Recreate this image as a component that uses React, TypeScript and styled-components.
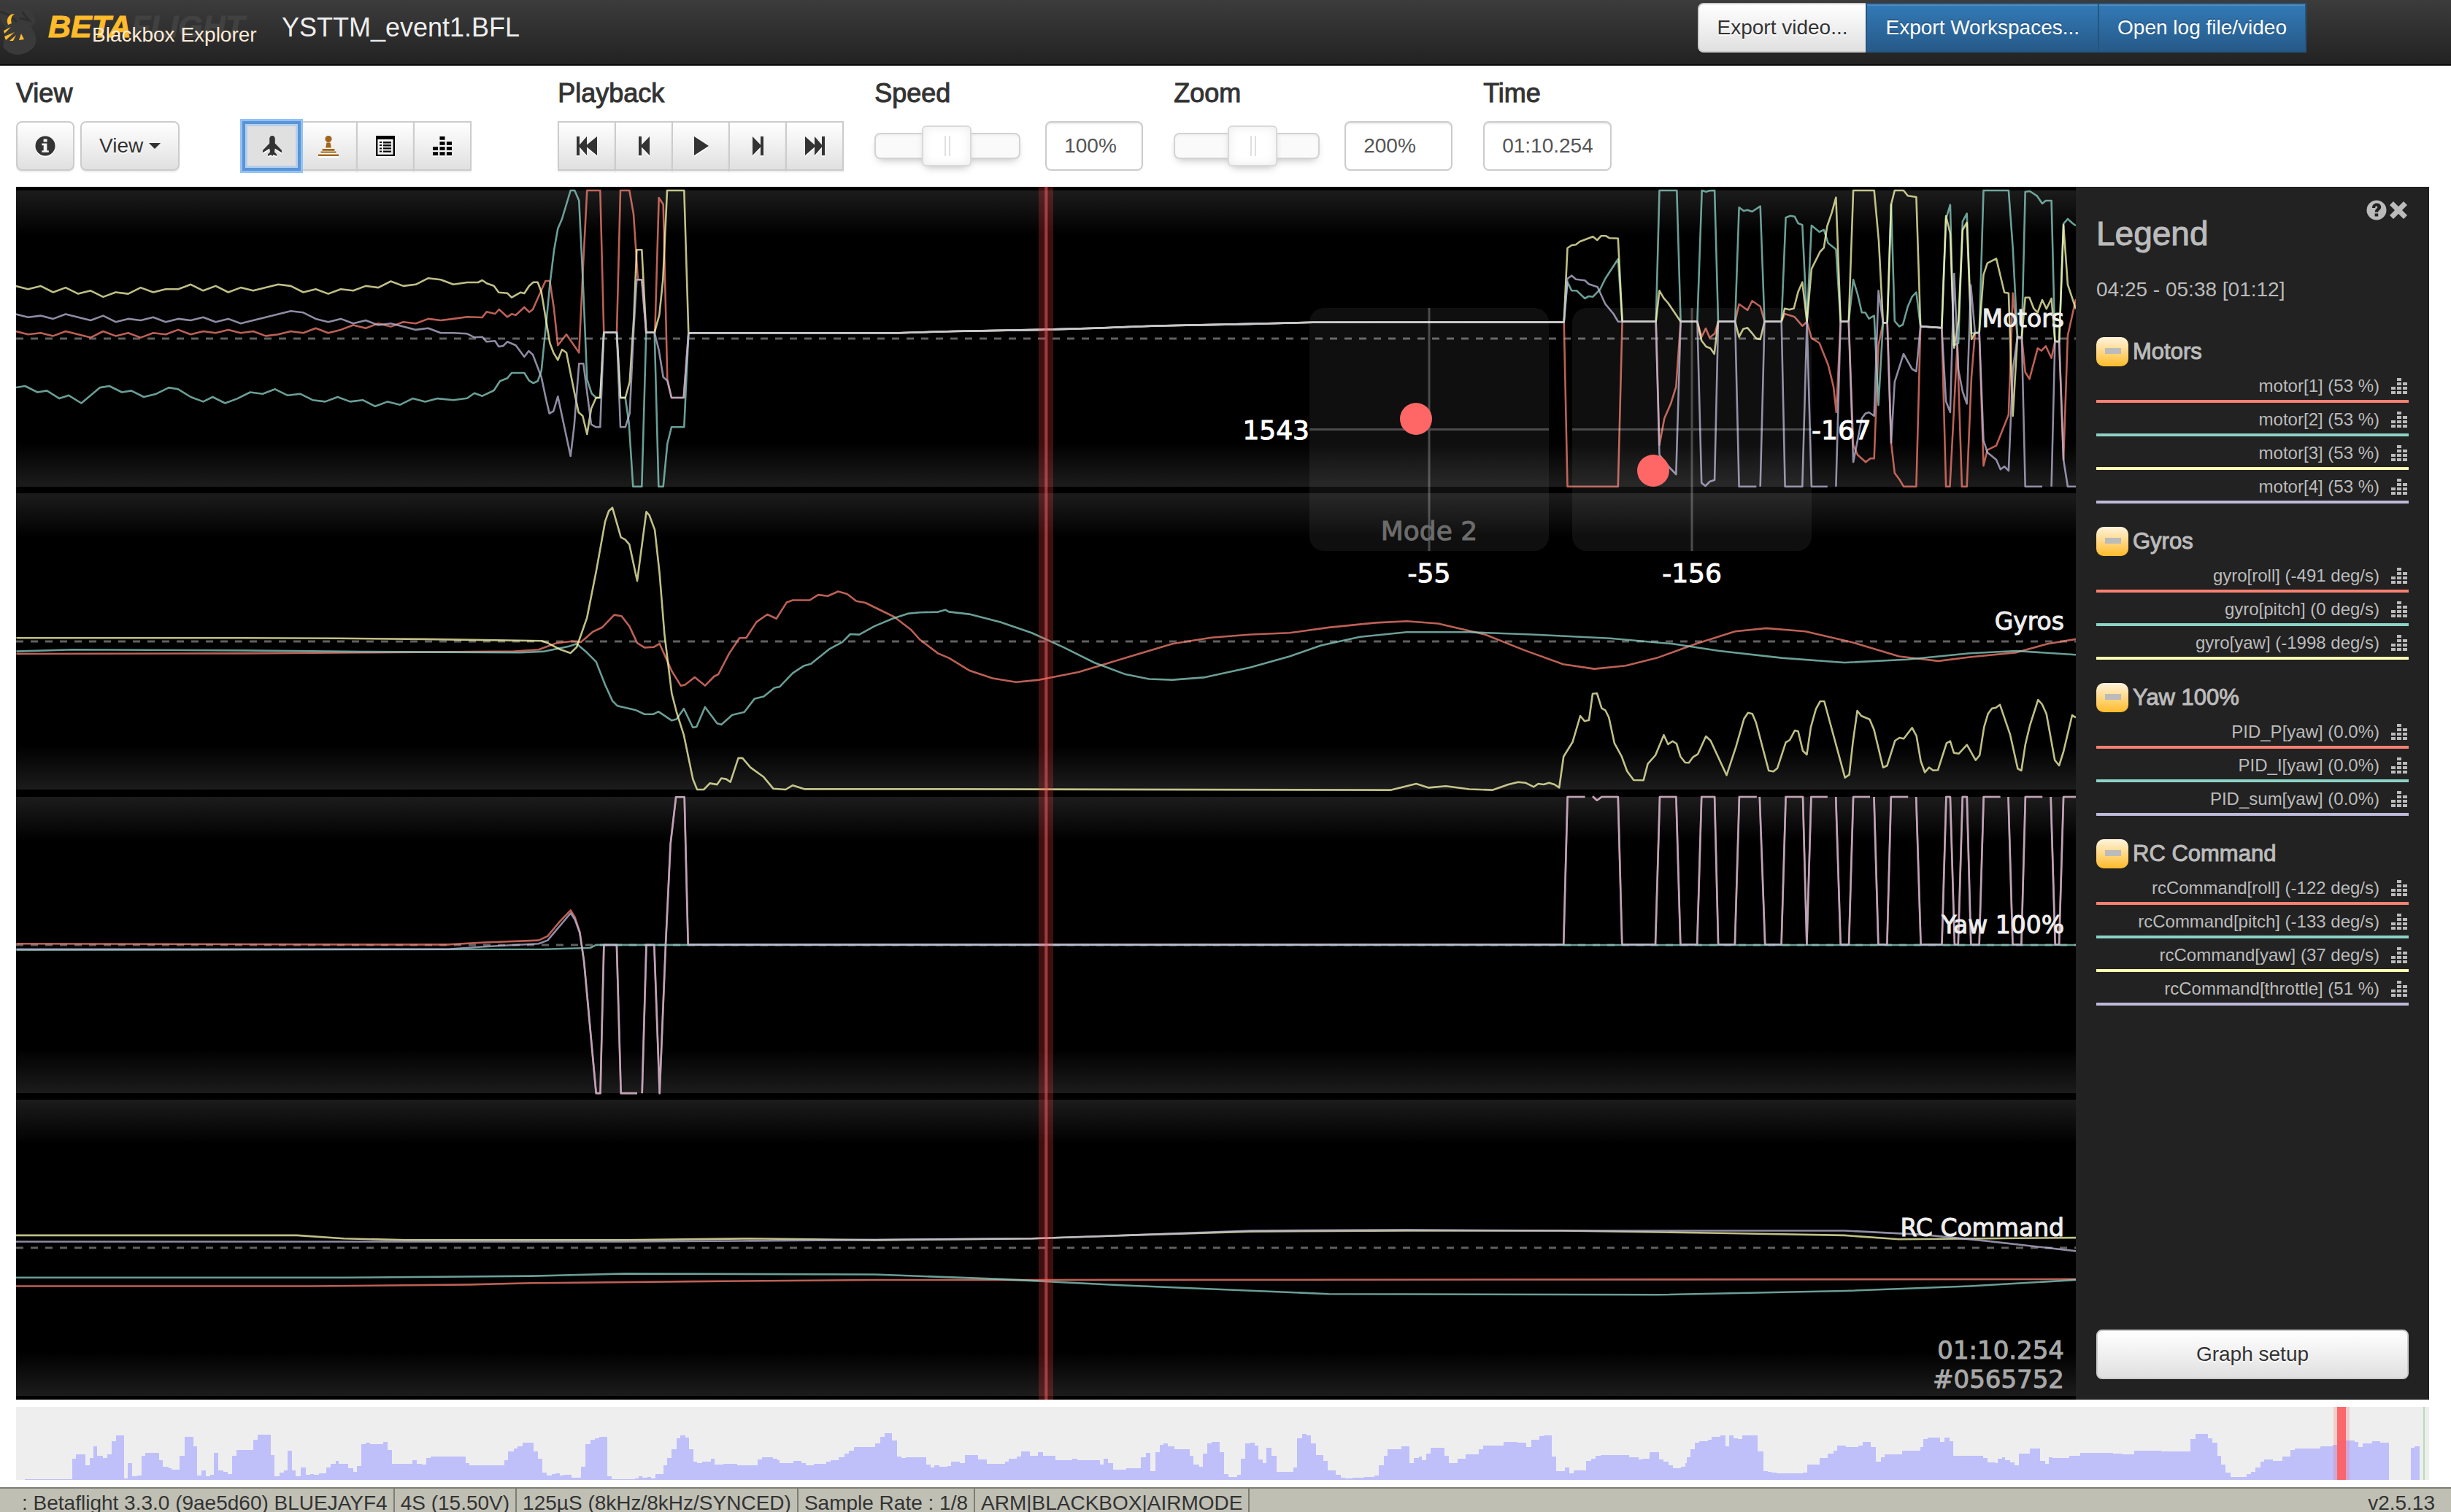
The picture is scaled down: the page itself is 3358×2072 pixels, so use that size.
import React from "react";
import styled, { createGlobalStyle, css } from "styled-components";

const GlobalStyle = createGlobalStyle`
  *, *::before, *::after { box-sizing: border-box; }
  html, body { margin: 0; background: #fff; }
  body, button, input {
    font-family: "Liberation Sans", Arial, Helvetica, sans-serif;
    font-size: 28px;
    line-height: 40px;
    color: #333;
  }
`;

const SERIES = {
  red: "#fb8072",
  teal: "#8dd3c7",
  yellow: "#ffffb3",
  purple: "#bebada",
};
type SeriesColor = keyof typeof SERIES;

/* ---------- page shell ---------- */

const Page = styled.div`
  display: flex;
  flex-direction: column;
  height: 100vh;
  overflow: hidden;
`;

const Header = styled.header`
  display: flex;
  align-items: flex-start;
  height: 90px;
  flex: none;
  padding-right: 198px;
  background: linear-gradient(#3c3c3c, #222);
  border-bottom: 2px solid #080808;
`;

const Brand = styled.div`
  position: relative;
  display: flex;
  width: 386px;
  padding-top: 12px;
`;

const BrandName = styled.span`
  margin-left: 14px;
  font-size: 43px;
  line-height: 48px;
  font-weight: 700;
  font-style: italic;
  -webkit-text-stroke: 1px currentColor;
  color: #414141;
  b { color: #ffbb2a; }
`;

const BrandSub = styled.span`
  position: absolute;
  left: 126px;
  top: 28px;
  white-space: nowrap;
  color: #fdebd8;
`;

const FileName = styled.span`
  flex: 1;
  padding-top: 18px;
  font-size: 36px;
  color: #eee;
`;

/* ---------- buttons ---------- */

const buttonBase = css`
  display: inline-flex;
  align-items: center;
  justify-content: center;
  height: 68px;
  padding: 0 24px;
  border: 2px solid #ccc;
  border-radius: 8px;
  background: linear-gradient(#fff, #e0e0e0);
  box-shadow: inset 0 2px 0 rgba(255, 255, 255, 0.15), 0 2px 2px rgba(0, 0, 0, 0.075);
  text-shadow: 0 2px 0 #fff;
  white-space: nowrap;
  cursor: pointer;
`;

const Button = styled.button<{ $wide?: boolean }>`
  ${buttonBase}
  gap: 8px;
  width: ${(p) => (p.$wide ? "100%" : "auto")};
`;

const IconButton = styled.button`
  ${buttonBase}
  width: 80px;
  padding: 0;
  svg { filter: drop-shadow(0 2px 0 #fff); }
`;

const Segment = styled(IconButton)<{ $active?: boolean }>`
  border-radius: 0;
  & + & { margin-left: -2px; }
  ${(p) =>
    p.$active &&
    css`
      position: relative;
      z-index: 1;
      border-color: #5994d6;
      background: #e0e0e0;
      box-shadow: 0 0 0 3px #92c1f6, inset 0 0 0 2px #5994d6, inset 0 0 0 5px #b4cfee;
    `}
`;

const HeaderButtons = styled.div`
  display: flex;
  padding-top: 4px;
`;

const ExportButton = styled.button`
  ${buttonBase}
  padding: 0 25px;
  border-radius: 8px 0 0 8px;
`;

const PrimaryButton = styled.button`
  ${buttonBase}
  margin-left: -2px;
  padding: 0 25px;
  border-radius: 0;
  border-color: #245580;
  background: linear-gradient(#337ab7, #265a88);
  box-shadow: inset 0 2px 0 rgba(255, 255, 255, 0.15);
  text-shadow: 0 -2px 0 rgba(0, 0, 0, 0.2);
  color: #fff;
`;

const Caret = styled.span`
  border: 8px solid transparent;
  border-top-color: #333;
  border-bottom-width: 0;
`;

/* ---------- toolbar ---------- */

const Toolbar = styled.section`
  display: flex;
  gap: 42px;
  flex: none;
  padding: 18px 30px 22px 22px;
`;

const ToolGroup = styled.div<{ $after?: number }>`
  margin-right: ${(p) => p.$after ?? 0}px;
`;

const headingStyle = css`
  display: block;
  margin: 0 0 18px;
  font-size: 36px;
  line-height: 40px;
  font-weight: 400;
  -webkit-text-stroke: 1px currentColor;
`;
const ToolHeading = styled.h4`${headingStyle}`;
const ToolLabel = styled.label`${headingStyle}`;

const Controls = styled.div<{ $gap?: number }>`
  display: flex;
  align-items: center;
  gap: ${(p) => p.$gap ?? 0}px;
`;

const Segments = styled.div<{ $before?: number }>`
  display: flex;
  margin-left: ${(p) => p.$before ?? 0}px;
`;

const TextBox = styled.input<{ $width: number }>`
  width: ${(p) => p.$width}px;
  height: 68px;
  padding: 0 24px;
  border: 2px solid #ccc;
  border-radius: 8px;
  background: #fff;
  box-shadow: inset 0 2px 2px rgba(0, 0, 0, 0.075);
  color: #555;
`;

const Slider = styled.input`
  appearance: none;
  width: 200px;
  height: 56px;
  margin: 0;
  background: transparent;
  &::-webkit-slider-runnable-track {
    height: 36px;
    border: 2px solid #d3d3d3;
    border-radius: 8px;
    background: #fafafa;
    box-shadow: inset 0 2px 3px #f0f0f0, 0 6px 12px -5px #bbb;
  }
  &::-webkit-slider-thumb {
    appearance: none;
    width: 68px;
    height: 56px;
    margin: -12px -2px 0;
    border: 2px solid #d9d9d9;
    border-radius: 6px;
    background:
      linear-gradient(#e0e0e0, #e0e0e0) 29px 50% / 2px 28px no-repeat,
      linear-gradient(#e0e0e0, #e0e0e0) 35px 50% / 2px 28px no-repeat,
      #fff;
    box-shadow: inset 0 0 14px #ebebeb, inset 0 0 2px #fff, 0 6px 12px -5px #bbb;
  }
`;

/* ---------- graph and legend ---------- */

const Main = styled.main`
  display: flex;
  flex: 1;
  min-height: 0;
  margin: 0 30px 0 22px;
`;

const GraphArea = styled.div`
  flex: 1;
  min-width: 0;
  background: #000;
  svg { display: block; width: 100%; height: 100%; }
  text { font-family: "DejaVu Sans", Verdana, sans-serif; }
`;

const Legend = styled.aside`
  display: flex;
  flex-direction: column;
  width: 484px;
  padding: 18px 28px 28px;
  background: #222;
  color: #bbb;
`;

const LegendTools = styled.div`
  display: flex;
  justify-content: flex-end;
  gap: 2px;
  height: 20px;
  button { padding: 0; border: 0; background: none; height: 28px; color: #bbb; line-height: 0; }
`;

const LegendTitle = styled.h3`
  margin: 0;
  font-size: 46px;
  line-height: 52px;
  font-weight: 400;
  -webkit-text-stroke: 1px currentColor;
`;

const LogRange = styled.p`
  margin: 31px 0 45px;
`;

const FieldGroup = styled.section`
  margin-bottom: 32px;
`;

const GroupTitle = styled.h4`
  display: flex;
  align-items: center;
  gap: 6px;
  height: 40px;
  margin: 0 0 4px;
  font-size: 31px;
  font-weight: 400;
  -webkit-text-stroke: 1px currentColor;
`;

const Toggle = styled.button`
  display: flex;
  align-items: center;
  width: 44px;
  height: 40px;
  padding: 0 0 2px 12px;
  border: 0;
  border-radius: 10px;
  background: linear-gradient(#fff4de, #ffbb2a);
  &::before {
    content: "";
    width: 22px;
    height: 8px;
    background: #bbb;
  }
`;

const FieldList = styled.ul`
  margin: 0;
  padding: 0;
  list-style: none;
`;

const Field = styled.li<{ $color: SeriesColor }>`
  display: flex;
  align-items: center;
  justify-content: flex-end;
  gap: 16px;
  height: 46px;
  padding: 4px 2px 0 0;
  border-bottom: 4px solid ${(p) => SERIES[p.$color]};
  font-size: 24px;
`;

const LegendFooter = styled.div`
  margin-top: auto;
`;

/* ---------- seek bar and status bar ---------- */

const SeekBar = styled.div`
  flex: none;
  height: 100px;
  margin: 10px 30px 10px 22px;
  background: #eee;
  svg { display: block; width: 100%; height: 100%; }
`;

const StatusBar = styled.footer`
  display: flex;
  flex: none;
  height: 34px;
  padding: 0 22px;
  border-top: 2px solid #7c7e75;
  background: #bfbfb4;
`;

const StatusItem = styled.span`
  padding: 0 8px;
  white-space: nowrap;
  border-right: 2px solid #7c7e75;
`;

const Version = styled.span`
  margin-left: auto;
`;

/* ---------- icons ---------- */

const Icon = ({ size = 28, color = "#333", children }: { size?: number; color?: string; children: React.ReactNode }) => (
  <svg width={size} height={size} viewBox="0 0 28 28" fill={color} aria-hidden="true">{children}</svg>
);

const InfoIcon = () => (
  <Icon>
    <circle cx="14" cy="14" r="13.5" />
    <path d="M11.6 4.5h5v4h-5zM9.4 10.6h7v9.6h2.4v2.6H9.4v-2.6h2.3v-7H9.4z" fill="#f4f4f4" />
  </Icon>
);
const PlaneIcon = () => (
  <Icon>
    <path d="M15 0c2.400 0 3.800 2 3.800 4.400v6.200L28 20v3.200L18.800 17.600l-.8 4.600 3 3.400v2.200l-4.400-1.800L15 28l-1.600-2-4.400 1.800v-2.200l3-3.400-.8-4.600L2 23.200V20l9.200-9.400V4.400C11.200 2 12.600 0 15 0z" />
  </Icon>
);
const PawnIcon = () => (
  <Icon color="#a0651b">
    <circle cx="14" cy="4.6" r="4.6" />
    <path d="M11.4 9.6h5.2l1.2 6.800h-7.600zM5.600 18h16.800v2.800H5.600zM3.600 21.400h20.800v2.200H3.600zM0 25.400h28V28H0z" />
  </Icon>
);
const TableIcon = () => (
  <Icon color="#000">
    <path fillRule="evenodd" d="M1 0h26v28H1zM3.4 5v20.800h21.200V5z" />
    <path d="M6 8h3v2H6zM6 12h3v2H6zM6 16.400h3v2H6zM6 20.600h3v2H6zM11 8h11v2.400H11zM11 12h11v2.400H11zM11 16.200h11v2.400H11zM11 20.400h11v2.400H11z" />
  </Icon>
);
const CELLS = [[0, 12], [0, 18], [8, 0], [8, 6], [8, 12], [8, 18], [16, 6], [16, 12], [16, 18]];
const EqualizerIcon = ({ size = 26, color = "#000" }: { size?: number; color?: string }) => (
  <svg width={size} height={size} viewBox="0 0 22 22" fill={color} aria-hidden="true">
    {CELLS.map(([x, y]) => <rect key={`${x}-${y}`} x={x} y={y} width="6" height="4" />)}
  </svg>
);
const FastBackIcon = () => <Icon><path d="M0 1h4v11.6L14 1v11.6L28 1v26L14 15.4V27L4 15.4V27H0z" /></Icon>;
const StepBackIcon = () => <Icon><path d="M7 1h4v11.6L22 1v26L11 15.4V27H7z" /></Icon>;
const PlayIcon = () => <Icon><path d="M5 1l20 13L5 27z" /></Icon>;
const StepForwardIcon = () => <Icon><path d="M22 1h-4v11.6L7 1v26l11-11.600V27h4z" /></Icon>;
const FastForwardIcon = () => <Icon><path d="M28 1h-4v11.6L14 1v11.6L1 1v26l13-11.600V27l10-11.600V27h4z" /></Icon>;
const HelpIcon = () => (
  <Icon color="#bbb">
    <circle cx="14" cy="14" r="13.5" />
    <path d="M8 11c0-4 2.6-6.4 6.2-6.400 3.400 0 6 2 6 5.200 0 4-4 4-4 7h-4.400c0-5 3.400-4.600 3.400-6.800 0-1-.6-1.400-1.400-1.400-1.200 0-1.600.8-1.600 2.400zM11.600 18.600h4.600v4h-4.600z" fill="#222" />
  </Icon>
);
const CloseIcon = () => (
  <Icon color="#bbb"><path d="M7 2l7 7 7-7 5 5-7 7 7 7-5 5-7-7-7 7-5-5 7-7-7-7z" /></Icon>
);

const BeeLogo = () => (
  <svg width="52" height="70" viewBox="0 0 52 70" aria-hidden="true">
    <path d="M0 0c10-4 20 2 26 10 8-2 16 2 20 12 4 4 2 12-4 14 8 10 12 26-2 34-12 8-28 6-36-6l4-26c-4-6-8-10-8-16z" fill="#3a3a3a" transform="translate(0 -12)" />
    <path d="M0 4l14 5 9 9M30 4l10 12-13-3" fill="none" stroke="#2e2e2e" strokeWidth="3" />
    <path d="M20 7c-9 0-12 8-9 15l5-2c-2-5 0-11 4-13zM5 30l10-5-9 9zM6 38l14-6-12 11zM13 44l9-8-4 8zM26 43l3-9 4 8z" fill="#ffbb2a" />
  </svg>
);

/* ---------- traces ---------- */

/** A run of "x,y" samples on its own grid; an "M" prefix lifts the pen. */
type Run = { x: number; y: number; sx: number; sy: number; pts: string };

const third = 1 / 3;
const wide = (pts: string): Run => ({ x: 0, y: 0, sx: 2.1416, sy: 2.1416, pts });
const burst = (pts: string): Run => ({ x: 640, y: 250, sx: third, sy: third, pts });
const recovery = (pts: string): Run => ({ x: 2100, y: 240, sx: 0.4847, sy: third, pts });
const spin = (pts: string): Run => ({ x: 0, y: 640, sx: 0.8291, sy: 0.574, pts });
const tail = (pts: string): Run => ({ x: 2080, y: 900, sx: 0.4974, sy: third, pts });

const toPath = (runs: Run[]) => {
  let d = "";
  runs.forEach((r) =>
    r.pts.trim().split(/\s+/).forEach((token) => {
      const lift = token[0] === "M";
      const [x, y] = (lift ? token.slice(1) : token).split(",").map(Number);
      d += `${d === "" || lift ? "M" : "L"}${(r.x + x * r.sx).toFixed(1)} ${(r.y + y * r.sy).toFixed(1)}`;
    })
  );
  return d;
};

const idle = wide("443,213 575,213 610,212 665,211 700,210 740,208.500 790,207.500 840,206.300 1000,206.200");

const pulses = tail("0,1183 125,1183 136,576 184,576 M205,574 217,590 230,576 275,576 286,1183 378,1183 390,576 435,576 447,1183 493,1183 505,576 541,576 551,1183 597,1183 609,576 657,576 M665,576 680,1183 725,1183 737,576 784,576 795,1183 807,576 852,576 M875,576 888,1183 911,1183 923,576 969,576 M980,576 992,1183 1016,1183 1027,576 1074,576 M1096,576 1109,1183 1167,1183 1179,576 1190,576 1202,1183 1212,1183 1224,576 1236,576 1247,1183 1270,1183 1282,576 1328,576 M1350,576 1362,1183 1386,1183 1397,576 1444,576 M1467,576 1479,1183 1490,1183 1502,576 1536,576");
const yawSpin = "965,1180 985,1495 992,1495 998,1141 1019,1141 1026,1495 1053,1495 M1061,1495 1068,1141 1081,1141 1090,1495 1100,1140 1108,900 1117,788 1131,788 1137,1140 1568,1140";

const TRACES: { color: SeriesColor; runs: Run[] }[] = [
  {
    color: "red",
    runs: [
      wide("10,212 18,214 26,213 34,215 42,212 50,214 58,216 66,212 74,215 82,213 90,216 98,213 106,214 114,211 122,214 130,212 138,213 146,211 154,213 162,212 170,215 178,214 186,212 194,213 202,210 210,213 218,211 226,208 234,210 242,207 250,209 258,206 266,207 274,204 282,205 290,204"),
      burst("0,553 62,555 80,532 115,540 131,522 165,553 183,541 200,545 235,513 255,533 270,522 322,405 340,405 357,520 373,670 408,625 460,700 478,320 493,33 547,33 562,617 615,617 630,33 667,33 684,130 702,400 718,400 736,617 772,617 788,63 806,90 823,810 840,885 890,885 910,620"),
      idle,
      recovery("88,603 98,1280 241,1280 253,602 348,602 358,1110 372,1000 390,940 405,870 418,602 465,602 477,665 489,630 500,668 515,650 524,602 572,602 583,530 607,555 620,517 643,540 655,602 703,602 712,570 740,583 762,620 775,603 788,670 810,690 835,780 850,870 858,975 870,602 893,602 906,1110 918,1150 941,1180 954,1165 965,1165 977,700 990,607 1002,607 1013,1100 1023,1225 1036,1250 1048,1280 1084,1280 1096,622 1156,628 1168,1280 1179,1280 1200,700 1213,1280 1227,1280 1240,830 1250,648 1262,648 1274,1195 1285,1130 1310,1112 1345,985 1357,485 1370,665 1382,668 1392,810 1404,838 1427,712 1438,722 1450,703 1466,752 1476,683 1488,685 1500,1170 1512,660 1535,510"),
    ],
  },
  {
    color: "teal",
    runs: [
      wide("10,248 16,247 24,251 30,250 38,255 44,253 52,258 58,253 64,248 70,247 78,251 84,250 92,254 100,252 108,248 114,249 122,254 130,257 136,254 144,258 152,255 160,251 168,252 176,249 184,253 192,252 200,256 208,257 216,254 224,257 232,256 240,260 248,257 256,259 264,255 272,257 280,255 290,256"),
      burst("0,887 30,866 62,878 110,855 135,817 165,805 183,783 235,783 255,815 272,825 290,817 305,775 325,580 340,420 357,280 373,190 390,150 425,33 442,33 460,75 478,450 493,810 512,868 530,885 547,885 562,617 615,617 630,885 650,885 665,990 682,1250 718,1250 736,617 770,617 787,1250 806,1250 823,1075 840,1006 892,1006 910,620"),
      idle,
      recovery("88,603 98,440 110,475 124,475 147,507 158,498 170,500 190,470 205,425 241,345 253,602 348,602 358,63 407,63 418,602 465,602 478,63 490,68 500,64 514,63 524,602 572,602 583,133 596,147 607,143 620,150 643,128 655,602 703,602 715,175 728,167 740,170 750,198 762,205 775,603 788,207 810,233 823,225 835,280 857,305 870,602 893,602 906,430 918,490 930,565 940,565 950,590 965,578 977,945 990,607 1002,607 1013,120 1023,600 1036,622 1046,615 1060,540 1072,500 1084,482 1096,622 1156,628 1168,180 1180,122 1190,700 1203,690 1215,190 1227,158 1240,650 1262,648 1274,63 1345,63 1357,300 1370,665 1382,668 1392,68 1405,66 1425,85 1440,117 1450,105 1466,105 1476,683 1488,685 1500,200 1512,180 1525,197 1535,208"),
    ],
  },
  {
    color: "yellow",
    runs: [
      wide("10,183 18,185 26,183 34,187 42,184 50,188 58,186 66,190 74,187 82,188 90,184 98,187 106,185 114,185 122,182 130,186 138,183 146,187 154,184 162,186 170,184 178,182 186,183 194,187 202,185 210,188 218,185 226,186 234,183 242,184 250,180 258,183 266,182 274,178 282,179 290,182"),
      burst("0,411 45,411 62,402 80,415 110,425 130,452 165,455 183,473 220,452 235,456 255,425 272,410 290,410 305,450 325,570 340,660 355,700 373,730 390,687 408,700 440,860 458,945 475,960 493,1035 510,930 530,885 547,885 562,617 615,617 630,885 650,885 668,820 685,560 697,277 718,277 736,617 770,617 790,545 805,400 822,33 892,33 910,620"),
      idle,
      recovery("88,603 98,300 110,288 122,286 133,273 170,253 182,267 193,250 207,250 217,259 241,260 253,602 348,602 358,475 370,505 382,525 418,602 465,602 477,680 490,705 502,712 513,735 524,602 572,602 583,665 595,632 607,628 620,650 632,672 643,675 655,602 703,602 712,548 725,553 738,548 750,480 762,440 775,603 788,385 812,315 823,298 832,210 845,155 857,92 870,602 893,602 906,63 965,63 978,270 990,607 1002,607 1013,120 1023,63 1048,63 1060,85 1084,90 1096,622 1156,628 1168,168 1180,240 1191,710 1203,600 1215,225 1227,195 1240,675 1250,648 1262,648 1274,410 1285,362 1310,343 1333,482 1345,485 1357,990 1370,665 1382,668 1392,503 1404,503 1416,548 1427,565 1440,513 1452,550 1466,507 1476,683 1488,685 1500,205 1512,450 1535,550"),
    ],
  },
  {
    color: "purple",
    runs: [
      wide("10,201 18,203 26,202 34,204 42,201 50,203 58,205 66,202 74,206 82,204 90,205 98,203 106,206 114,204 122,205 130,203 138,206 146,204 154,207 162,205 170,203 178,201 186,199 194,200 202,204 210,206 218,204 226,207 234,205 242,208 250,207 258,209 266,211 274,210 282,213 290,213"),
      burst("0,622 30,637 62,635 80,655 115,652 130,675 148,672 165,655 200,670 235,717 253,693 270,708 305,800 322,880 338,950 355,940 373,880 425,1125 440,1000 460,745 478,745 510,995 530,1006 547,1006 562,617 615,617 630,1006 650,1006 668,950 685,600 697,400 718,400 736,617 770,617 788,690 806,800 823,815 840,885 890,885 910,620"),
      idle,
      recovery("88,603 98,425 110,413 122,428 147,433 158,448 183,460 205,530 228,570 241,602 348,602 358,1150 385,1200 405,1230 418,602 465,602 477,1265 488,1278 500,1260 514,1253 524,602 572,602 583,1280 632,1280 M643,1280 655,602 703,602 713,1280 762,1280 775,603 788,1280 833,1280 M857,1280 870,602 893,602 906,1180 930,1000 940,980 950,975 965,990 977,475 990,607 1002,607 1013,1100 1023,850 1048,735 1072,797 1084,807 1096,622 1156,628 1168,930 1180,975 1191,405 1203,800 1215,890 1227,940 1238,452 1250,648 1262,648 1274,1090 1285,1140 1310,1170 1322,1210 1333,1198 1345,1215 1357,800 1370,665 1382,668 1392,1280 1440,1280 M1466,1280 1476,683 1488,685 1500,1170 1512,1280 1535,1280"),
    ],
  },
  {
    color: "red",
    runs: [
      spin("27,446 400,445 600,443 850,440 890,436 920,420 945,416 960,418 980,393 995,383 1015,353 1027,356 1040,380 1053,420 1065,431 1080,430 1090,422 1110,487 1125,522 1132,520 1148,502 1165,522 1180,500 1187,495 1205,445 1222,408 1233,408 1250,370 1268,352 1283,362 1300,323 1310,318 1338,318 1352,305 1368,308 1385,297 1400,303 1415,320 1430,324 1478,358 1505,388 1520,412 1550,445"),
      wide("607,421 620,429 635,434 650,436.500 665,435 690,430 720,421 750,412 775,408 800,406 825,405 850,401.500 880,398.500 900,397.500 920,399 950,406 975,416 1000,425 1020,428 1040,426 1060,421 1085,412 1110,404 1130,402 1155,404 1185,411 1215,420 1240,423 1260,420.500 1290,417.500 1310,412 1328,409"),
    ],
  },
  {
    color: "teal",
    runs: [
      spin("27,440 120,436 400,438 600,441 860,443 900,440 940,428 953,422 970,443 985,465 1000,520 1012,558 1020,570 1050,580 1065,590 1080,590 1088,584 1110,605 1118,602 1130,577 1145,622 1151,620 1165,573 1185,612 1192,615 1210,592 1230,585 1247,553 1262,548 1280,527 1288,525 1310,492 1328,475 1340,470 1370,435 1392,418 1405,399 1420,400 1445,380 1475,362 1500,350 1520,347 1550,346 1562,341"),
      wide("607,391.500 620,393 640,398 660,405 680,414 700,424 720,431.500 735,434.500 750,435 770,433.500 800,427 825,420 845,413 870,407.500 900,404.500 940,404.500 980,406 1030,408.500 1070,412 1100,416.500 1140,421 1180,424 1220,422 1260,418 1290,416.500 1328,419"),
    ],
  },
  {
    color: "yellow",
    runs: [
      spin("27,408 400,408 560,409 700,411 800,413 895,415 905,420 925,435 943,444 953,430 970,360 985,250 1000,130 1006,105 1012,97 1026,168 1033,173 1040,185 1053,272 1068,107 1073,115 1082,150 1090,255 1098,400 1110,540 1118,585 1130,640 1145,745 1152,770 1163,770 1173,755 1185,758 1192,743 1200,745 1207,752 1220,695 1227,695 1240,717 1262,740 1278,768 1298,770 1310,760 1330,769 1568,769"),
      wide("890,505.500 898,503.500 906,501.500 914,504 925,503 940,505 955,505.500 965,502"),
      tail("0,515 20,518 43,535 55,522 70,525 85,518 100,525 113,538 125,410 150,350 171,243 183,265 195,260 205,152 217,150 230,212 240,220 250,250 265,355 285,410 300,470 318,507 345,508 357,440 378,405 401,322 413,360 425,347 436,357 447,410 460,435 470,436 482,412 495,400 517,327 530,345 574,487 600,370 622,255 633,230 645,235 655,270 690,468 703,472 714,458 737,352 748,342 762,303 771,306 784,387 795,402 806,290 820,215 832,183 843,183 900,497 912,485 922,350 934,222 945,243 968,257 980,300 1005,455 1016,448 1038,345 1050,333 1062,337 1085,292 1097,325 1109,430 1120,475 1132,455 1143,467 1156,466 1180,355 1190,347 1200,395 1214,398 1236,362 1260,425 1271,405 1283,290 1294,235 1305,212 1315,210 1327,197 1355,320 1376,460 1386,468 1397,360 1410,280 1432,177 1443,195 1455,235 1478,425 1490,447 1502,390 1526,240 1536,250"),
    ],
  },
  { color: "red", runs: [spin(`27,1138 300,1139 600,1140 740,1140 800,1135 890,1130 905,1120 925,1085 943,1058 950,1075 958,1110 ${yawSpin}`), pulses] },
  { color: "teal", runs: [spin("27,1153 900,1151 975,1148 985,1141 1568,1141"), tail("0,1185 1536,1185")] },
  { color: "purple", runs: [spin(`27,1151 740,1151 800,1145 890,1138 905,1130 943,1065 950,1080 958,1112 ${yawSpin}`), pulses] },
  { color: "red", runs: [wide("10,823 200,823 300,822 340,821 440,820 560,819 660,819 1328,818.500")] },
  { color: "teal", runs: [wide("10,817.500 220,817.500 340,816.500 400,815 560,815.500 640,818.500 720,822.500 850,828 1060,828.500 1180,826 1260,823 1328,819")] },
  { color: "yellow", runs: [wide("10,790.500 190,790.500 220,792.500 260,793.500 400,793.500 480,792.500 560,793.500 660,792.500 720,790.500 800,788 900,787.500 1000,787.500 1100,789 1180,790.500 1215,793 1328,792")] },
  { color: "purple", runs: [wide("10,794.500 400,794.500 480,794 660,792.500 720,790.500 800,787.500 900,787 1000,787.500 1180,787.500 1230,790 1270,794 1328,800.500")] },
];

const PANELS = [
  { top: 261, label: "Motors" },
  { top: 676, label: "Gyros" },
  { top: 1092, label: "Yaw 100%" },
  { top: 1507, label: "RC Command" },
];

const Stick = ({ cx, px, py }: { cx: number; px: number; py: number }) => (
  <g>
    <rect x={cx - 164} y={422} width={328} height={333} rx={20} fill="#fff" fillOpacity={0.06} />
    <path d={`M${cx - 164} 588.500h328M${cx} 422v333`} stroke="#fff" strokeOpacity={0.25} strokeWidth={3} fill="none" />
    <circle cx={px} cy={py} r={22} fill="#ff6666" />
  </g>
);

const Graph = () => (
  <svg viewBox="22 256 2822 1662" preserveAspectRatio="none" role="img" aria-label="Flight log graph">
    <defs>
      <linearGradient id="panel" x1="0" y1="0" x2="0" y2="1">
        <stop offset="0" stopColor="#fff" stopOpacity="0.11" />
        <stop offset="0.15" stopColor="#fff" stopOpacity="0" />
        <stop offset="0.85" stopColor="#fff" stopOpacity="0" />
        <stop offset="1" stopColor="#fff" stopOpacity="0.11" />
      </linearGradient>
    </defs>
    {PANELS.map((p) => (
      <g key={p.label}>
        <rect x={22} y={p.top} width={2822} height={406} fill="url(#panel)" />
        <path d={`M22 ${p.top + 203}H2844`} stroke="#606060" strokeWidth={3} strokeDasharray="10 10" />
      </g>
    ))}
    {TRACES.map((t, i) => (
      <path key={i} d={toPath(t.runs)} fill="none" stroke={SERIES[t.color]} strokeOpacity={0.75} strokeWidth={2.6} strokeLinejoin="round" />
    ))}
    <g fill="#eee" stroke="#eee" strokeWidth={1} fontSize={33} textAnchor="end">
      {PANELS.map((p) => <text key={p.label} x={2828} y={p.top + 187}>{p.label}</text>)}
    </g>
    <rect x={1423} y={256} width={20} height={1662} fill="#ff4040" fillOpacity={0.24} />
    <rect x={1430} y={256} width={6} height={1662} fill="#ff6464" fillOpacity={0.2} />
    <rect x={1432} y={256} width={3} height={1662} fill="#ff6464" fillOpacity={0.4} />
    <Stick cx={1958} px={1940} py={574} />
    <Stick cx={2318} px={2265} py={645} />
    <g fill="#fff" stroke="#fff" strokeWidth={1} fontSize={36}>
      <text x={1794} y={602} textAnchor="end">1543</text>
      <text x={2482} y={602}>-167</text>
      <text x={1958} y={798} textAnchor="middle">-55</text>
      <text x={2318} y={798} textAnchor="middle">-156</text>
      <text x={1958} y={740} textAnchor="middle" fill="#6c6c6c" stroke="#6c6c6c">Mode 2</text>
    </g>
    <g fill="#a8a8a8" stroke="#a8a8a8" strokeWidth={1} fontSize={34} textAnchor="end">
      <text x={2828} y={1862}>01:10.254</text>
      <text x={2828} y={1902}>#0565752</text>
    </g>
  </svg>
);

/* ---------- activity overview ---------- */

const ACTIVITY_A = "31:381 91:297 96:279 108:323 113:293 118:247 123:285 130:293 136:280 141:225 147:201 157:377 161:315 167:370 173:366 179:285 184:273 201:304 206:330 213:335 217:342 227:285 233:207 244:247 249:367 255:345 260:369 266:363 270:273 276:345 282:350 288:359 293:285 299:261 320:219 326:197 342:282 347:369 353:354 359:345 363:264 369:345 374:370 380:333 386:363 392:359 397:362 403:357 412:333 418:319 424:306 428:318 440:336 446:351 451:327 457:237 462:231 468:237 484:228 490:261 495:318 521:303 527:318 533:321 539:294 544:288 588:315 593:324 637:303 642:267 649:255 654:246 660:231 674:267 680:297 685:354 691:366 697:359 702:357 707:366 712:363 722:375 734:330 740:237 746:219 752:213 757:207 767:370 773:382 802:377 807:369 812:375 818:371 823:377 828:361 838:324 843:294 849:258 855:213 860:200 866:210 871:258 876:310 881:315 887:309 898:297 903:321 914:318 932:323 957:300 963:291 977:297 982:304 985:315 1003:306 1013:315 1018:324 1028:318 1044:310 1050:304 1060:291 1067:276 1073:264 1079:249 1106:234 1112:207 1118:191 1127:222 1134:288 1139:294 1145:291 1170:321 1176:333 1181:324 1187:330 1197:327 1202:309 1213:315 1219:282 1236:300 1247:318 1270:309 1275:297 1285:288 1290:267 1301:285 1312:270 1318:285 1334:303 1355:297 1361:304 1390:321 1395:297 1400:315 1407:342 1423:336 1442:291 1448:273 1454:348 1460:270 1466:240 1470:234 1476:246 1484:258 1503:285 1508:321 1515:330 1520:276 1526:234 1531:228 1541:270 1547:360 1552:372 1563:362";
const ACTIVITY_B = "0:657 6:594 12:591 18:603 23:660 28:675 33:612 40:645 46:711 68:693 73:573 79:555 85:561 91:595 97:642 107:666 113:705 123:723 130:735 135:738 145:734 160:732 173:726 179:684 185:645 190:619 208:606 218:675 224:654 231:648 235:663 240:636 246:612 264:645 270:675 281:657 291:639 308:618 314:603 340:588 358:591 370:609 376:579 387:564 392:561 403:648 409:708 420:693 426:717 431:705 447:666 454:657 460:645 466:642 503:651 515:660 520:657 530:630 542:660 548:670 554:684 560:696 570:690 576:675 578:651 583:618 588:591 594:585 605:579 610:567 621:561 628:606 633:561 638:573 644:576 650:561 670:628 677:708 683:712 688:714 694:717 728:714 734:681 750:654 760:636 768:625 773:602 784:609 800:603 806:588 816:609 823:669 829:651 834:639 857:624 880:609 884:576 890:570 906:588 912:570 918:585 923:645 962:654 967:672 978:675 981:657 986:651 990:663 997:672 1002:684 1008:636 1022:615 1036:666 1042:678 1047:651 1052:654 1073:645 1088:633 1130:636 1142:639 1158:624 1193:627 1230:576 1237:555 1253:573 1259:591 1265:645 1270:681 1276:714 1282:732 1303:720 1309:711 1315:693 1321:669 1326:660 1337:666 1350:648 1360:621 1366:615 1399:606 1415:600 1421:585 1430:582 1443:588 1448:609 1454:594 1466:585 1476:591 1488:744 1516:612 1521:606 1527:744";

const activityPath = () => {
  let d = "M22 100";
  const add = (data: string, x0: number, sx: number, base: number) =>
    data.split(" ").forEach((step) => {
      const [x, y] = step.split(":").map(Number);
      d += `H${Math.round(x0 + x * sx)}V${(100 - (base - y) / 3).toFixed(1)}`;
    });
  add(ACTIVITY_A, 0, 1.0842, 384);
  add(ACTIVITY_B, 1700, 1.0574, 744);
  return `${d}Z`;
};

const Activity = () => (
  <svg viewBox="22 0 3306 100" preserveAspectRatio="none" role="img" aria-label="Log activity">
    <path d={activityPath()} fill="#bfbffa" shapeRendering="crispEdges" />
    <rect x={3197} y={0} width={22} height={100} fill="#ff5050" fillOpacity={0.2} />
    <rect x={3202} y={0} width={12} height={100} fill="#ff5c5f" fillOpacity={0.9} />
    <rect x={3320} y={0} width={2} height={100} fill="#b4dfb4" />
  </svg>
);

/* ---------- legend data ---------- */

const GROUPS: { title: string; fields: [string, SeriesColor][] }[] = [
  { title: "Motors", fields: [["motor[1] (53 %)", "red"], ["motor[2] (53 %)", "teal"], ["motor[3] (53 %)", "yellow"], ["motor[4] (53 %)", "purple"]] },
  { title: "Gyros", fields: [["gyro[roll] (-491 deg/s)", "red"], ["gyro[pitch] (0 deg/s)", "teal"], ["gyro[yaw] (-1998 deg/s)", "yellow"]] },
  { title: "Yaw 100%", fields: [["PID_P[yaw] (0.0%)", "red"], ["PID_I[yaw] (0.0%)", "teal"], ["PID_sum[yaw] (0.0%)", "purple"]] },
  { title: "RC Command", fields: [["rcCommand[roll] (-122 deg/s)", "red"], ["rcCommand[pitch] (-133 deg/s)", "teal"], ["rcCommand[yaw] (37 deg/s)", "yellow"], ["rcCommand[throttle] (51 %)", "purple"]] },
];

const STATUS = [": Betaflight 3.3.0 (9ae5d60) BLUEJAYF4", "4S (15.50V)", "125µS (8kHz/8kHz/SYNCED)", "Sample Rate : 1/8", "ARM|BLACKBOX|AIRMODE"];

export default function App() {
  return (
    <Page>
      <GlobalStyle />
      <Header>
        <Brand>
          <BeeLogo />
          <BrandName><b>BETA</b>FLIGHT</BrandName>
          <BrandSub>Blackbox Explorer</BrandSub>
        </Brand>
        <FileName>YSTTM_event1.BFL</FileName>
        <HeaderButtons>
          <ExportButton type="button">Export video...</ExportButton>
          <PrimaryButton type="button">Export Workspaces...</PrimaryButton>
          <PrimaryButton type="button">Open log file/video</PrimaryButton>
        </HeaderButtons>
      </Header>

      <Toolbar>
        <ToolGroup $after={76}>
          <ToolHeading>View</ToolHeading>
          <Controls $gap={8}>
            <IconButton type="button" aria-label="Log information"><InfoIcon /></IconButton>
            <Button type="button">View<Caret /></Button>
            <Segments $before={78}>
              <Segment type="button" aria-label="Craft" $active><PlaneIcon /></Segment>
              <Segment type="button" aria-label="Sticks"><PawnIcon /></Segment>
              <Segment type="button" aria-label="Table"><TableIcon /></Segment>
              <Segment type="button" aria-label="Analyser"><EqualizerIcon /></Segment>
            </Segments>
          </Controls>
        </ToolGroup>
        <ToolGroup>
          <ToolHeading>Playback</ToolHeading>
          <Segments>
            <Segment type="button" aria-label="Jump to start"><FastBackIcon /></Segment>
            <Segment type="button" aria-label="Step back"><StepBackIcon /></Segment>
            <Segment type="button" aria-label="Play"><PlayIcon /></Segment>
            <Segment type="button" aria-label="Step forward"><StepForwardIcon /></Segment>
            <Segment type="button" aria-label="Jump to end"><FastForwardIcon /></Segment>
          </Segments>
        </ToolGroup>
        <ToolGroup>
          <ToolLabel htmlFor="speed">Speed</ToolLabel>
          <Controls $gap={34}>
            <Slider id="speed" type="range" min={0} max={100} defaultValue={51} />
            <TextBox $width={134} aria-label="Speed value" defaultValue="100%" />
          </Controls>
        </ToolGroup>
        <ToolGroup>
          <ToolLabel htmlFor="zoom">Zoom</ToolLabel>
          <Controls $gap={34}>
            <Slider id="zoom" type="range" min={0} max={100} defaultValue={58} />
            <TextBox $width={148} aria-label="Zoom value" defaultValue="200%" />
          </Controls>
        </ToolGroup>
        <ToolGroup>
          <ToolLabel htmlFor="time">Time</ToolLabel>
          <TextBox id="time" $width={176} defaultValue="01:10.254" />
        </ToolGroup>
      </Toolbar>

      <Main>
        <GraphArea><Graph /></GraphArea>
        <Legend>
          <LegendTools>
            <button type="button" aria-label="Help"><HelpIcon /></button>
            <button type="button" aria-label="Close legend"><CloseIcon /></button>
          </LegendTools>
          <LegendTitle>Legend</LegendTitle>
          <LogRange>04:25 - 05:38 [01:12]</LogRange>
          {GROUPS.map((g) => (
            <FieldGroup key={g.title}>
              <GroupTitle><Toggle type="button" aria-label={`Toggle ${g.title}`} />{g.title}</GroupTitle>
              <FieldList>
                {g.fields.map(([name, color]) => (
                  <Field key={name} $color={color}>{name}<EqualizerIcon size={22} color="#bbb" /></Field>
                ))}
              </FieldList>
            </FieldGroup>
          ))}
          <LegendFooter><Button type="button" $wide>Graph setup</Button></LegendFooter>
        </Legend>
      </Main>

      <SeekBar><Activity /></SeekBar>

      <StatusBar>
        {STATUS.map((s) => <StatusItem key={s}>{s}</StatusItem>)}
        <Version>v2.5.13</Version>
      </StatusBar>
    </Page>
  );
}
